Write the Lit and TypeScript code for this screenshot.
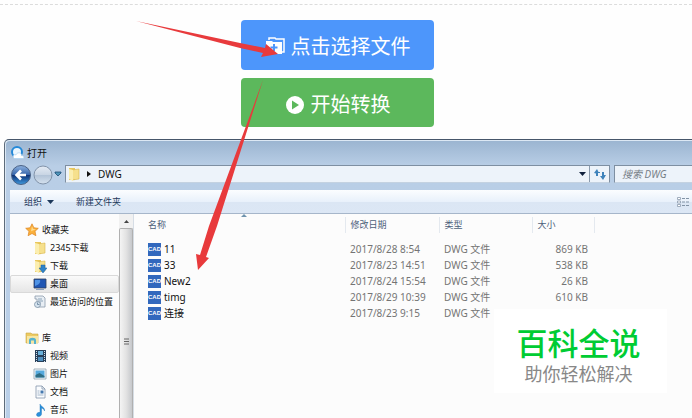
import { LitElement, html, css, svg } from "lit";
import { customElement } from "lit/decorators.js";

const folder = svg`<path d="M2 1h6v12H2z" fill="#e9c75c"/><path d="M5 3l7-1v10l-7 1z" fill="#f6e08d" stroke="#d9b64c" stroke-width=".6"/><path d="M2 2l4 1v11l-4-2z" fill="#fbeeb0"/>`;

const icons: Record<string, unknown> = {
  star: svg`<path d="M7 .8l1.900 4 4.400.5-3.300 3 .9 4.400L7 10.500 3.100 12.700 4 8.300.7 5.300l4.400-.5z" fill="#fbb13c" stroke="#dd8420" stroke-width=".7"/><path d="M7 3l1 3 3 .3-5 2z" fill="#ffdc8c"/>`,
  folder,
  download: svg`${folder}<path d="M8 6h4v3h2l-4 5-4-5h2z" fill="#2e83c9" stroke="#1d62a3" stroke-width=".5"/>`,
  desktop: svg`<path d="M1 2h12v9H1z" fill="#1f55b3" stroke="#31405e" stroke-width=".8"/><path d="M2 3h5c1 3-2 5-5 6z" fill="#4f93e6"/><path d="M3 12h8v1H3z" fill="#8ba0bd"/>`,
  recent: svg`<path d="M2 1h8l2 2v9H4V4H2z" fill="#e8eef4" stroke="#8a9bab" stroke-width=".8"/><path d="M5 4h4M5 6h5M5 8h3" stroke="#7590aa" stroke-width=".8"/><circle cx="4.500" cy="9.500" r="3" fill="#d5e3ee" stroke="#7e92a6" stroke-width=".8"/><path d="M4.500 7.500v2h2" stroke="#55708c" stroke-width=".7" fill="none"/>`,
  library: svg`<path d="M1 2h5l1 1h6v9H1z" fill="#ecca62" stroke="#c9a544" stroke-width=".6"/><path d="M2 5h11v7H2z" fill="#f7e6a2"/><path d="M4 13V9c0-3 7-3 7 0v4H9V9.500H6V13z" fill="#57b3ce"/>`,
  video: svg`<path d="M2 1h11v12H2z" fill="#28405a"/><path d="M5 2h5v4H5z" fill="#69b0d9"/><path d="M5 8h5v4H5z" fill="#4f8fbf"/><path d="M3.500 2v11M11.500 2v11" stroke="#d4e1ea" stroke-dasharray="1 1"/>`,
  picture: svg`<path d="M1 2h12v10H1z" fill="#f4f8fa" stroke="#8fa1ae" stroke-width=".8"/><path d="M2.500 3.500h9v7h-9z" fill="#55a9dd"/><path d="M2.500 8l4-2 5 3v1.500h-9z" fill="#2f6e85"/>`,
  document: svg`<path d="M3 1h6l3 3v9H3z" fill="#fafcfe" stroke="#8496ab" stroke-width=".8"/><path d="M9 1v3h3" fill="none" stroke="#8496ab" stroke-width=".8"/><path d="M4.500 6h2M4.500 8h2M4.500 10h6" stroke="#8da4bd" stroke-width=".8"/><path d="M7.500 5.500h3v3h-3z" fill="#4478ae"/>`,
  music: svg`<path d="M7 1c1 3 5 3 4.500 7-.5-2-1.500-2.500-3-3v6c0 3-5 3.300-5 .8C3.500 10 5.500 9 7 9.500z" fill="#2a91dc" stroke="#1a6fb5" stroke-width=".4"/>`,
};

const icon = (name: string) => html`<svg class="icon" viewBox="0 0 14 14" aria-hidden="true">${icons[name]}</svg>`;

const places = [
  { head: { icon: "star", label: "收藏夹" }, items: [
    { icon: "folder", label: "2345下载" },
    { icon: "download", label: "下载" },
    { icon: "desktop", label: "桌面", selected: true },
    { icon: "recent", label: "最近访问的位置" },
  ] },
  { head: { icon: "library", label: "库" }, items: [
    { icon: "video", label: "视频" },
    { icon: "picture", label: "图片" },
    { icon: "document", label: "文档" },
    { icon: "music", label: "音乐" },
  ] },
];

const files = [
  ["11", "2017/8/28 8:54", "869 KB"],
  ["33", "2017/8/23 14:51", "538 KB"],
  ["New2", "2017/8/24 15:54", "26 KB"],
  ["timg", "2017/8/29 10:39", "610 KB"],
  ["连接", "2017/8/23 9:15", ""],
];

@customElement("open-dialog")
export class OpenDialog extends LitElement {
  static styles = css`
    :host {
      display: flex;
      flex-direction: column;
      box-sizing: border-box;
      border-top: 1px solid #46566a;
      border-left: 1px solid #5d6b7a;
      border-top-left-radius: 5px;
      padding-left: 5px;
      background: linear-gradient(#9ab4d0, #b9cee6 26px, #b9cfe8);
      box-shadow: inset 1px 1px #dce8f4;
      color: #111;
      font: 9px/18px "Noto Sans", "Noto Sans CJK SC", sans-serif;
      overflow: hidden;
    }
    button { font: inherit; color: inherit; border: 0; padding: 0; margin: 0; background: none; }
    svg { display: block; flex: none; }
    .icon { width: 14px; height: 14px; }
    .title { display: flex; align-items: center; gap: 3px; height: 25px; padding-left: 1px; box-sizing: border-box; }
    .title h1 { margin: 0; font: inherit; font-size: 10px; }
    .nav { display: flex; height: 18px; align-items: center; }
    .back, .forward { height: 22px; width: 22px; margin-top: 2px; }
    .history { width: 11px; }
    .address {
      flex: 1; min-width: 0; display: flex; align-items: center; align-self: stretch;
      box-sizing: border-box; border: 1px solid #7e8fa2; border-bottom-color: #c4d2e1;
      background: #edf3fa; margin-right: 4px; gap: 3px; padding-left: 1px; font-size: 10px;
    }
    .crumb { flex: 1; text-align: left; padding-left: 2px; }
    .refresh { border-left: 1px solid #8b9bad; width: 20px; display: flex; justify-content: center; align-items: center; align-self: stretch; }
    .search {
      width: 78px; height: 18px; box-sizing: border-box; border: 1px solid #7e8fa2; border-right: 0;
      border-bottom-color: #c4d2e1; background: #edf3fa; padding: 0 0 0 7px; font: inherit; font-size: 10px; border-radius: 0;
    }
    .search::placeholder { color: #777f88; font-style: italic; opacity: 1; }
    .tools {
      display: flex; align-items: center; gap: 22px; height: 24px; margin-top: 7px; box-sizing: border-box;
      border-bottom: 1px solid #a6b6ca; background: linear-gradient(#fbfdff, #e9f1fb 50%, #dbe6f4 52%, #dce7f5);
      color: #1e395b; padding: 0 2px 0 14px;
    }
    .menu { display: flex; align-items: center; gap: 5px; }
    .view { margin-left: auto; }
    .body { flex: 1; display: flex; min-height: 0; background: #fcfcfc; }
    .places { width: 109px; padding-top: 7px; box-sizing: border-box; white-space: nowrap; }
    .places ul { list-style: none; margin: 0 0 18px; padding: 0; }
    .place { display: flex; align-items: center; gap: 3px; height: 18px; box-sizing: border-box; width: 100%; padding-left: 22px; border: 1px solid transparent; border-radius: 2px; }
    .head { padding-left: 14px; }
    .selected { border-color: #d9d9d9; background: linear-gradient(#fafafa, #e6e6e6); }
    .scroll { width: 14px; display: flex; flex-direction: column; border-right: 1px solid #d6dde5; background: #f1f1f1; }
    .up { height: 14px; display: flex; align-items: center; justify-content: center; }
    .thumb {
      flex: 1; display: flex; justify-content: center; padding-top: 109px; border: 1px solid #b0b0b0; border-bottom: 0;
      border-radius: 2px 2px 0 0; background: linear-gradient(90deg, #f4f4f4, #e3e3e3 50%, #c6c8cc);
    }
    .list { flex: 1; min-width: 0; }
    table { border-collapse: collapse; table-layout: fixed; width: 460px; }
    th, td { padding: 0 6px 0 5px; font-weight: normal; text-align: left; height: 16px; line-height: 16px; white-space: nowrap; }
    th { color: #4c607a; border-right: 1px solid #e4e9ef; }
    th:first-child, td:first-child { padding-left: 14px; }
    .gap { height: 8px; }
    td { font-size: 10px; color: #747474; }
    .name { color: #111; display: flex; align-items: center; gap: 3px; height: 16px; }
    .cad {
      width: 13px; height: 13px; background: #3268bd; color: #fff; text-align: center;
      font: bold 6px/13px "Liberation Sans", sans-serif;
    }
    .size { text-align: right; }
    .c1 { width: 211px; } .c2 { width: 94px; } .c3 { width: 93px; } .c4 { width: 62px; }
    .sort { display: flex; height: 3px; padding-left: 107px; }
  `;

  render() {
    return html`
      <header class="title">
        <svg width="13" height="13" viewBox="0 0 13 13" aria-hidden="true">
          <circle cx="6" cy="6" r="5" fill="#eaf6ff" stroke="#2489d8" stroke-width="2"/>
          <path d="M3 12.500c-2-3 0-4.500 2-3.500 1-3.500 6-2.500 5.500.5 3 0 3 3 1 3z" fill="#fff" stroke="#9fcdee" stroke-width=".6"/>
        </svg>
        <h1>打开</h1>
      </header>
      <div class="nav">
        <button class="back" aria-label="后退"><svg width="22" height="22" viewBox="0 0 22 22">
          <defs><linearGradient id="b" x2="0" y2="1"><stop stop-color="#8fb3e0"/><stop offset=".48" stop-color="#3766ab"/><stop offset=".52" stop-color="#0d3276"/><stop offset="1" stop-color="#3f9be0"/></linearGradient></defs>
          <circle cx="11" cy="11" r="9.500" fill="url(#b)" stroke="#4b6285"/>
          <path d="M16 11H7M11 6.500L6.500 11l4.500 4.500" fill="none" stroke="#fff" stroke-width="2.600"/></svg></button>
        <button class="forward" aria-label="前进"><svg width="22" height="22" viewBox="0 0 22 22">
          <defs><linearGradient id="f" x2="0" y2="1"><stop stop-color="#e4ebf4"/><stop offset=".48" stop-color="#c9d5e4"/><stop offset=".52" stop-color="#b3c4d8"/><stop offset="1" stop-color="#d5e1ee"/></linearGradient></defs>
          <circle cx="11" cy="11" r="9" fill="url(#f)" stroke="#8293a9"/></svg></button>
        <button class="history" aria-label="历史"><svg width="8" height="6" viewBox="0 0 8 6"><path d="M1 1h6v1L4 5 1 2z" fill="#4d93b8" stroke="#1d4d74" stroke-width=".8"/></svg></button>
        <div class="address">
          ${icon("folder")}
          <svg width="9" height="8" viewBox="0 0 9 8"><path d="M3 1l4 3-4 3z" fill="#111"/></svg>
          <button class="crumb">DWG</button>
          <svg width="7" height="4" viewBox="0 0 7 4"><path d="M0 0h7L3.500 4z" fill="#10203c"/></svg>
          <button class="refresh" aria-label="刷新"><svg width="12" height="12" viewBox="0 0 12 12"><path d="M0 5l3-4 1.500 3H6v1H4v3H2V5.500zM12 7l-3 5-3-4h2V4h2v3z" fill="#3f83bb"/></svg></button>
        </div>
        <input class="search" type="search" aria-label="搜索" placeholder="搜索 DWG">
      </div>
      <div class="tools">
        <button class="menu">组织 <svg width="7" height="4" viewBox="0 0 7 4"><path d="M0 0h7L3.500 4z" fill="#1e395b"/></svg></button>
        <button>新建文件夹</button>
        <button class="view" aria-label="视图"><svg width="13" height="10" viewBox="0 0 13 10"><path d="M.5.5h3v2h-3zM.5 4h3v2h-3zM.5 7.500h3v2h-3z" fill="#fff" stroke="#8b9bad" stroke-width=".8"/><path d="M5 1.500h3M9 1.500h3M5 5h3M9 5h3M5 8.500h3M9 8.500h3" stroke="#8293a6"/></svg></button>
      </div>
      <div class="body">
        <nav class="places">
          ${places.map((g) => html`<button class="place head">${icon(g.head.icon)}${g.head.label}</button>
            <ul>${g.items.map((p: any) => html`<li><button class="place ${p.selected ? "selected" : ""}">${icon(p.icon)}${p.label}</button></li>`)}</ul>`)}
        </nav>
        <div class="scroll">
          <div class="up"><svg width="5" height="3" viewBox="0 0 5 3"><path d="M0 3l2.500-3L5 3z" fill="#444"/></svg></div>
          <div class="thumb"><svg width="5" height="8" viewBox="0 0 5 8"><path d="M0 1h5M0 3.500h5M0 6h5" stroke="#666"/></svg></div>
        </div>
        <div class="list">
          <div class="sort"><svg width="6" height="3" viewBox="0 0 6 3"><path d="M0 3l3-3 3 3z" fill="#6f93ae"/></svg></div>
          <table>
            <colgroup><col class="c1"><col class="c2"><col class="c3"><col class="c4"></colgroup>
            <thead><tr><th>名称</th><th>修改日期</th><th>类型</th><th>大小</th></tr></thead>
            <tbody>
              <tr class="gap"></tr>
              ${files.map(([name, date, size]) => html`<tr>
                <td><span class="name"><span class="cad" aria-hidden="true">CAD</span>${name}</span></td>
                <td>${date}</td><td>DWG 文件</td><td class="size">${size}</td></tr>`)}
            </tbody>
          </table>
        </div>
      </div>`;
  }
}

@customElement("app-root")
export class AppRoot extends LitElement {
  static styles = css`
    :host {
      display: flex; flex-direction: column; position: relative; box-sizing: border-box; height: 100vh; overflow: hidden;
      background: #fefefe; font-family: "Noto Sans", "Noto Sans CJK SC", sans-serif;
    }
    .rule { border: 0; border-top: 1px dashed #dcdcdc; margin: 4px 0 15px; }
    .actions { display: flex; flex-direction: column; align-items: center; gap: 8px; padding-right: 17px; margin-bottom: 12px; }
    .action {
      display: flex; align-items: center; justify-content: center; gap: 6px; width: 193px; height: 50px; border: 0; border-radius: 4px;
      padding: 2px 0 0; color: #fff; font: 20px/28px "Noto Sans CJK SC", sans-serif;
    }
    .pick { background: #4d96fb; }
    .start { background: #5cb85c; height: 49px; }
    open-dialog { flex: 1; min-height: 0; margin-left: 4px; }
    .arrows { position: absolute; left: 0; top: 0; pointer-events: none; }
    .brand {
      position: absolute; right: 25px; bottom: 25px; width: 173px; height: 84px; box-sizing: border-box; padding: 14px 4px 0 0;
      background: #fff; text-align: center; font-family: "Noto Sans CJK SC", sans-serif; color: #888;
    }
    .brand strong { display: block; font-size: 31px; line-height: 38px; font-weight: 500; color: #0c3; }
    .brand span { display: block; font-size: 18px; line-height: 24px; }
  `;

  render() {
    return html`
      <hr class="rule">
      <div class="actions">
        <button class="action pick">
          <svg width="20" height="20" viewBox="0 0 20 20" aria-hidden="true"><path d="M4 4V2h6l1 1h8v13h-2" fill="none" stroke="#fff" stroke-width="1.500"/><path d="M1 5h6l1 1h9v12H1z" fill="#fff"/><path d="M9 8v7M5.500 11.500h7" stroke="#4d96fb" stroke-width="2"/></svg>
          点击选择文件
        </button>
        <button class="action start">
          <svg width="20" height="20" viewBox="0 0 20 20" aria-hidden="true"><circle cx="10" cy="11" r="9" fill="#fff"/><path d="M7 6.500l7 4.500-7 4.500z" fill="#5cb85c"/></svg>
          开始转换
        </button>
      </div>
      <open-dialog></open-dialog>
      <div class="brand"><strong>百科全说</strong><span>助你轻松解决</span></div>
      <svg class="arrows" width="300" height="280" viewBox="0 0 300 280" aria-hidden="true">
        <path d="M136 21L240 43l25 5 1-4 12 10-17 3 2-4-23-5z" fill="#e83a3c"/>
        <path d="M263 80L217 226l-11 31 3 1-11 12-2-16 4 1 9-29z" fill="#e83a3c"/>
      </svg>`;
  }
}
